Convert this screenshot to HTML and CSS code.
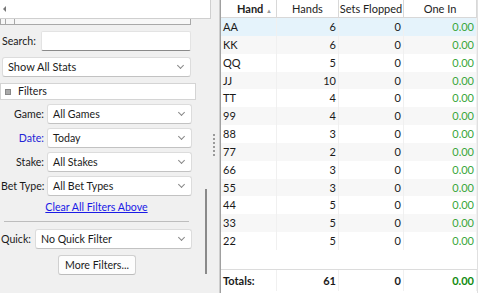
FILE: index.html
```html
<!DOCTYPE html>
<html lang="en">
<head>
    <meta charset="UTF-8">
    <title>Hand Stats</title>
    <link rel="stylesheet" href="styles.css">
</head>
<body>
    <div class="left">
        <div class="popup"><span class="arrow-left"></span></div>
        <div class="left-body">
            <div class="controls">
                <div class="hscroll"><span class="hthumb"></span></div>
                <div class="row search-row">
                    <label>Search:</label>
                    <div class="input"></div>
                </div>
                <div class="select stats">Show All Stats</div>
                <div class="section"><span class="collapse"></span>Filters</div>
                <div class="row filter">
                    <label>Game:</label>
                    <div class="select">All Games</div>
                </div>
                <div class="row filter">
                    <label class="active">Date:</label>
                    <div class="select">Today</div>
                </div>
                <div class="row filter">
                    <label>Stake:</label>
                    <div class="select">All Stakes</div>
                </div>
                <div class="row filter">
                    <label>Bet Type:</label>
                    <div class="select">All Bet Types</div>
                </div>
                <a class="clear-link" href="#">Clear All Filters Above</a>
                <hr class="divider">
                <div class="row quick">
                    <label>Quick:</label>
                    <div class="select">No Quick Filter</div>
                </div>
                <button class="btn">More Filters...</button>
            </div>
            <div class="vscroll"><span class="vthumb"></span></div>
        </div>
    </div>

    <div class="splitter"><span class="grip"></span></div>

    <div class="grid-wrap">
        <div class="grid">
            <div class="head first">Hand <span class="sort">&#9650;</span></div>
            <div class="head">Hands</div>
            <div class="head">Sets Flopped</div>
            <div class="head">One In</div>
        </div>
        <div class="grid body" id="rows"></div>
        <div class="spacer"></div>
        <div class="grid totals">
            <div class="cell">Totals:</div>
            <div class="cell num">61</div>
            <div class="cell num">0</div>
            <div class="cell num green">0.00</div>
        </div>
    </div>

    <script>
        const hands = [
            ['AA', 6], ['KK', 6], ['QQ', 5], ['JJ', 10], ['TT', 4], ['99', 4], ['88', 3],
            ['77', 2], ['66', 3], ['55', 3], ['44', 5], ['33', 5], ['22', 5]
        ];
        const rowsDiv = document.getElementById('rows');
        hands.forEach((h, i) => {
            let cls = 'cell';
            if (i === 0) cls += ' selected';
            else if (i % 2 === 1) cls += ' alt';
            rowsDiv.innerHTML +=
                `<div class="${cls}">${h[0]}</div>` +
                `<div class="${cls} num">${h[1]}</div>` +
                `<div class="${cls} num">0</div>` +
                `<div class="${cls} num green">0.00</div>`;
        });
    </script>
</body>
</html>
```

FILE: styles.css
```css
* {
    box-sizing: border-box;
    margin: 0;
    padding: 0;
}

body {
    display: flex;
    width: 478px;
    height: 293px;
    overflow: hidden;
    background: #f0f0f0;
    font-family: 'Lato', sans-serif;
    font-size: 10.6px;
    color: #1a1a1a;
    white-space: nowrap;
}

/* left filter panel */
.left {
    width: 211px;
    flex-shrink: 0;
    display: flex;
    flex-direction: column;
}

.popup {
    height: 19px;
    background: #fff;
    border-right: 1px solid #cfcfcf;
    border-bottom: 1px solid #cfcfcf;
    padding: 6px 0 0 3px;
}

.arrow-left {
    display: block;
    width: 0;
    height: 0;
    border-top: 3px solid transparent;
    border-bottom: 3px solid transparent;
    border-right: 3px solid #777;
}

.left-body {
    display: flex;
    flex: 1;
}

.controls {
    width: 200px;
    padding-left: 1px;
}

.hscroll {
    width: 191px;
    height: 6px;
    border: 1px solid #a8a8a8;
    border-top: none;
    background: #f7f7f7;
    margin-left: -1px;
}

.hthumb {
    display: block;
    margin-left: 4px;
    width: 10px;
    height: 5px;
    border-left: 1px solid #a8a8a8;
    border-right: 1px solid #a8a8a8;
}

.row {
    display: flex;
    align-items: center;
}

.row label {
    flex-shrink: 0;
}

.search-row {
    margin-top: 6px;
    height: 20px;
}

.search-row label {
    width: 40px;
    padding-left: 1px;
}

.input {
    width: 150px;
    height: 20px;
    background: #fff;
    border: 1px solid #e3e3e3;
    border-bottom: 1px solid #8a8a8a;
    border-radius: 2px;
}

.select {
    position: relative;
    height: 20px;
    background: #fff;
    border: 1px solid #dcdcdc;
    border-bottom-color: #c2c2c2;
    border-radius: 3px;
    padding: 1px 5px;
    line-height: 16px;
    flex: 1;
}

.select::after {
    content: '';
    position: absolute;
    right: 7px;
    top: 5px;
    width: 4px;
    height: 4px;
    border-right: 1px solid #888;
    border-bottom: 1px solid #888;
    transform: rotate(45deg);
}

.stats {
    margin: 6px 0 0 1px;
    width: 189px;
    font-size: 11px;
}

.section {
    margin: 6px 0 0 -1px;
    width: 196px;
    height: 17px;
    background: #fff;
    border: 1px solid #d4d4d4;
    padding-left: 4px;
    line-height: 15px;
    display: flex;
    align-items: center;
}

.collapse {
    width: 6px;
    height: 6px;
    background: #aaa;
    border: 1px solid #888;
    margin-right: 7px;
}

.filter {
    margin-top: 4px;
    height: 20px;
    width: 191px;
}

.filter label {
    width: 46px;
    text-align: right;
    padding-right: 3px;
}

label.active {
    color: #2424d6;
}

.clear-link {
    display: block;
    text-align: center;
    width: 191px;
    margin-top: 5px;
    color: #1a1ae6;
    text-decoration: underline;
}

.divider {
    border: none;
    border-top: 1px solid #bdbdbd;
    width: 185px;
    margin: 8px 0 0 3px;
}

.quick {
    margin-top: 7px;
    height: 20px;
    width: 191px;
}

.quick label {
    width: 34px;
}

.btn {
    display: block;
    margin: 6px 0 0 57px;
    width: 78px;
    height: 20px;
    background: #fdfdfd;
    border: 1px solid #d0d0d0;
    border-bottom-color: #bcbcbc;
    border-radius: 3px;
    font-family: inherit;
    font-size: inherit;
    color: #1a1a1a;
}

.vscroll {
    flex: 1;
    display: flex;
    justify-content: center;
}

.vthumb {
    margin-top: 170px;
    width: 2px;
    height: 85px;
    background: #8a8a8a;
}

/* splitter */
.splitter {
    width: 9px;
    flex-shrink: 0;
    border-right: 1px solid #cdcdcd;
    position: relative;
}

.grip {
    position: absolute;
    left: 2px;
    top: 133px;
    width: 2px;
    height: 24px;
    background: radial-gradient(circle, #9a9a9a 0.8px, transparent 1px) 0 0 / 2px 4px;
}

/* results grid */
.grid-wrap {
    flex: 1;
    background: #fff;
    border-left: 1px solid #a0a0a0;
    display: flex;
    flex-direction: column;
    border-right: 2px solid #e0e0e0;
}

.grid {
    display: grid;
    grid-template-columns: 56px 62px 65px 73px;
}

.head {
    height: 18px;
    border-bottom: 1px solid #d8d8d8;
    border-right: 1px solid #d8d8d8;
    text-align: center;
    line-height: 17px;
    color: #222;
    font-size: 11px;
}

.head.first {
    font-weight: bold;
    text-align: right;
    padding-right: 4px;
}

.sort {
    font-size: 6px;
    color: #999;
    vertical-align: middle;
    font-weight: normal;
}

.cell {
    height: 17.85px;
    line-height: 17px;
    padding: 0 2px;
    border-right: 1px solid #f0f0f0;
    font-size: 11px;
}

.cell.alt {
    background: #f7f7f7;
}

.cell.selected {
    background: #e5f3fb;
}

.num {
    text-align: right;
}

.green {
    color: #3aa63a;
}

.spacer {
    flex: 1;
}

.totals {
    border-top: 1px solid #dcdcdc;
    height: 22px;
    margin-bottom: 2px;
    font-weight: bold;
}

.totals .cell {
    height: 21px;
    line-height: 22px;
}

.totals .green {
    color: #0f8a0f;
}
```
